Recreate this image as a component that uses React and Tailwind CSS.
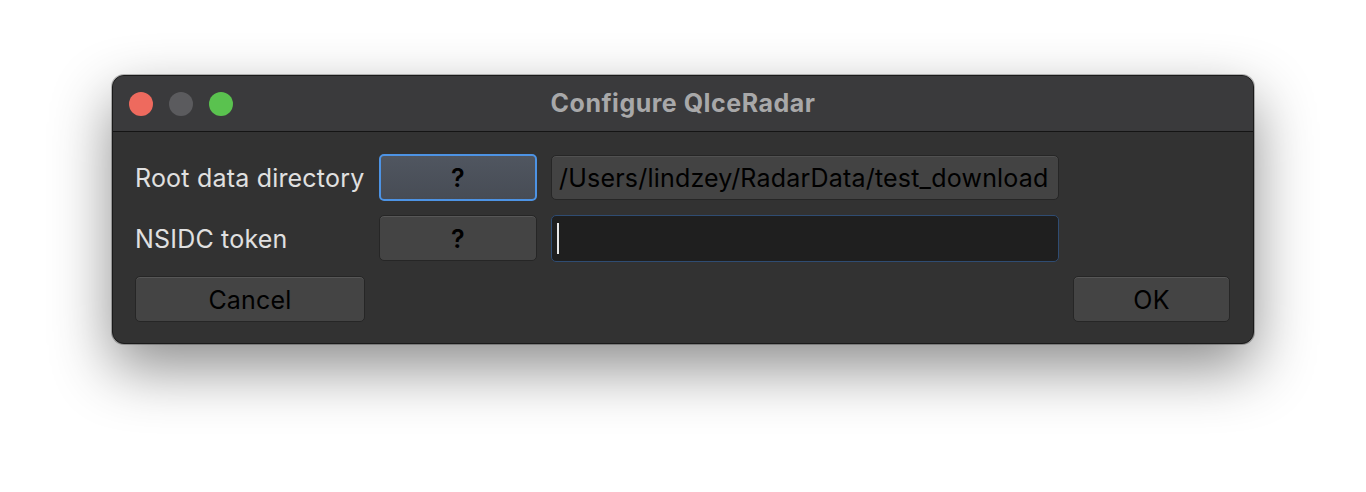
export default function App() {
  const font = { fontFamily: 'Inter, "Noto Sans", "Liberation Sans", sans-serif' };

  return (
    <div className="w-[1366px] h-[492px] bg-white pt-[75px] pl-[112px]" style={font}>
      <div className="w-[1142px] h-[269px] rounded-[12px] border border-[#1a1a1a] bg-[#323232] shadow-[0_24px_60px_rgba(0,0,0,0.45),0_0_0_1px_rgba(0,0,0,0.25)] overflow-hidden flex flex-col">
        {/* Title bar */}
        <div className="relative h-[56px] bg-[#3a3a3c] border-b border-[#141414] flex items-center justify-center shrink-0">
          <div className="absolute left-[16px] top-[16px] flex gap-[16px]">
            <span className="w-[24px] h-[24px] rounded-full bg-[#ee6a5e]" />
            <span className="w-[24px] h-[24px] rounded-full bg-[#5b5b5e]" />
            <span className="w-[24px] h-[24px] rounded-full bg-[#5ac24f]" />
          </div>
          <span className="text-[25px] font-bold text-[#a8a8a9] tracking-[0.5px]">Configure QIceRadar</span>
        </div>

        {/* Body */}
        <div className="grid grid-cols-[230px_158px_508px_157px] gap-x-[14px] gap-y-[14px] pl-[22px] pt-[22px] text-[25px] tracking-[0.2px]">
          {/* Row 1 */}
          <div className="h-[46px] pt-[4px] flex items-center text-[#e0e0e0] whitespace-nowrap">Root data directory</div>
          <button className="h-[47px] pt-[3px] rounded-[5px] border-2 border-[#4d93e4] bg-gradient-to-b from-[#505660] to-[#474c55] font-semibold text-black flex items-center justify-center">
            ?
          </button>
          <div className="h-[45px] mt-[1px] pt-[3px] rounded-[5px] border border-[#262626] bg-[#434343] shadow-[inset_0_1px_0_rgba(255,255,255,0.08)] px-[7px] flex items-center text-black whitespace-nowrap overflow-hidden">
            /Users/lindzey/RadarData/test_download
          </div>
          <div />

          {/* Row 2 */}
          <div className="h-[46px] pt-[4px] flex items-center text-[#e0e0e0]">NSIDC token</div>
          <button className="h-[46px] pt-[3px] rounded-[5px] border border-[#262626] bg-[#444444] shadow-[inset_0_1px_0_rgba(255,255,255,0.1)] font-semibold text-black flex items-center justify-center">
            ?
          </button>
          <div className="h-[47px] rounded-[5px] border border-[#2f4c72] bg-[#1f1f1f] flex items-center pl-[5px]">
            <span className="w-[2px] h-[31px] bg-[#e8e8e8]" />
          </div>
          <div />

          {/* Row 3 */}
          <button className="h-[46px] pt-[3px] rounded-[5px] border border-[#262626] bg-[#444444] shadow-[inset_0_1px_0_rgba(255,255,255,0.1)] text-black flex items-center justify-center">
            Cancel
          </button>
          <div />
          <div />
          <button className="h-[46px] pt-[3px] rounded-[5px] border border-[#262626] bg-[#444444] shadow-[inset_0_1px_0_rgba(255,255,255,0.1)] text-black flex items-center justify-center">
            OK
          </button>
        </div>
      </div>
    </div>
  );
}
